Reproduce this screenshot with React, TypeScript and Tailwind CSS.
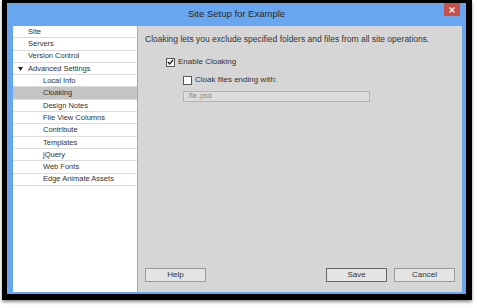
import React from "react";

const items: { label: string; level: number; arrow?: boolean; active?: boolean }[] = [
  { label: "Site", level: 0 },
  { label: "Servers", level: 0 },
  { label: "Version Control", level: 0 },
  { label: "Advanced Settings", level: 0, arrow: true },
  { label: "Local Info", level: 1 },
  { label: "Cloaking", level: 1, active: true },
  { label: "Design Notes", level: 1 },
  { label: "File View Columns", level: 1 },
  { label: "Contribute", level: 1 },
  { label: "Templates", level: 1 },
  { label: "jQuery", level: 1 },
  { label: "Web Fonts", level: 1 },
  { label: "Edge Animate Assets", level: 1 },
];

const Checkbox = ({ checked }: { checked?: boolean }) => (
  <span className="flex h-[9px] w-[9px] items-center justify-center border border-[#555] bg-white">
    {checked && (
      <svg width="8" height="8" viewBox="0 0 8 8">
        <path d="M1 4 L3.2 6.3 L7 1.2" fill="none" stroke="#222" strokeWidth="1.6" />
      </svg>
    )}
  </span>
);

const Button = ({ label, primary }: { label: string; primary?: boolean }) => (
  <button
    type="button"
    className={`flex h-[14px] w-[61px] items-center justify-center bg-[#e4e4e4] text-[8px] text-[#333] ${
      primary ? "border border-[#666]" : "border border-[#9a9a9a]"
    }`}
  >
    {label}
  </button>
);

export default function App() {
  return (
    <div className="h-[308px] w-[477px] bg-white font-['Liberation_Sans',Arial,sans-serif]">
      <div className="ml-[2px] h-[300px] w-[470px] bg-black pl-[5px] pr-[6px] pt-[3px] pb-[6px] shadow-[0_2px_3px_rgba(0,0,0,0.45)]">
        <div className="flex h-full flex-col bg-[#68a6f0]">
          {/* Title bar */}
          <div className="relative flex h-[23px] shrink-0 items-center justify-center">
            <span className="text-[9.5px] text-[#2a2a2a]">Site Setup for Example</span>
            <div className="absolute right-[6px] top-0 flex h-[13px] w-[16px] items-center justify-center bg-[#c9504a]">
              <svg width="6" height="6" viewBox="0 0 6 6">
                <path d="M0.5 0.5 L5.5 5.5 M5.5 0.5 L0.5 5.5" stroke="white" strokeWidth="1.3" />
              </svg>
            </div>
          </div>

          {/* Body */}
          <div className="flex min-h-0 flex-1 pl-[6px] pr-[4px] pb-[2px]">
            {/* Sidebar */}
            <div className="w-[125px] shrink-0 border-r border-[#a8a8a8] bg-white">
              {items.map((it) => (
                <div
                  key={it.label}
                  className={`relative flex h-[12.3px] items-center border-b border-[#dcdcdc] text-[7.5px] leading-none text-[#333] ${
                    it.active ? "bg-[#c4c4c4]" : ""
                  } ${it.level === 0 ? "pl-[15px]" : "pl-[30px]"}`}
                >
                  {it.arrow && (
                    <svg className="absolute left-[5px] top-[4px]" width="5" height="4" viewBox="0 0 5 4">
                      <path d="M0 0 L5 0 L2.5 4 Z" fill="#222" />
                    </svg>
                  )}
                  {it.label}
                </div>
              ))}
            </div>

            {/* Content */}
            <div className="flex flex-1 flex-col bg-[#d6d6d6] pl-[7px] pr-[7px] pt-[8px] pb-[10px]">
              <div className="text-[8.5px] leading-[11px] text-[#333]">
                Cloaking lets you exclude specified folders and files from all site operations.
              </div>
              <div className="mt-[11px] flex items-center gap-[3px] pl-[21px] text-[8px] text-[#333]">
                <Checkbox checked />
                <span>Enable Cloaking</span>
              </div>
              <div className="mt-[6px] flex items-center gap-[3px] pl-[38px] text-[8px] text-[#333]">
                <Checkbox />
                <span>Cloak files ending with:</span>
              </div>
              <div className="mt-[5px] ml-[38px] flex h-[11px] w-[187px] items-center border border-[#b4b4b4] bg-[#dcdcdc] pl-[3px] text-[7px] text-[#888]">
                .fla .psd
              </div>
              <div className="flex-1" />
              <div className="flex items-center">
                <Button label="Help" />
                <div className="flex-1" />
                <Button label="Save" primary />
                <div className="w-[7px]" />
                <Button label="Cancel" />
              </div>
            </div>
          </div>
        </div>
      </div>
    </div>
  );
}
